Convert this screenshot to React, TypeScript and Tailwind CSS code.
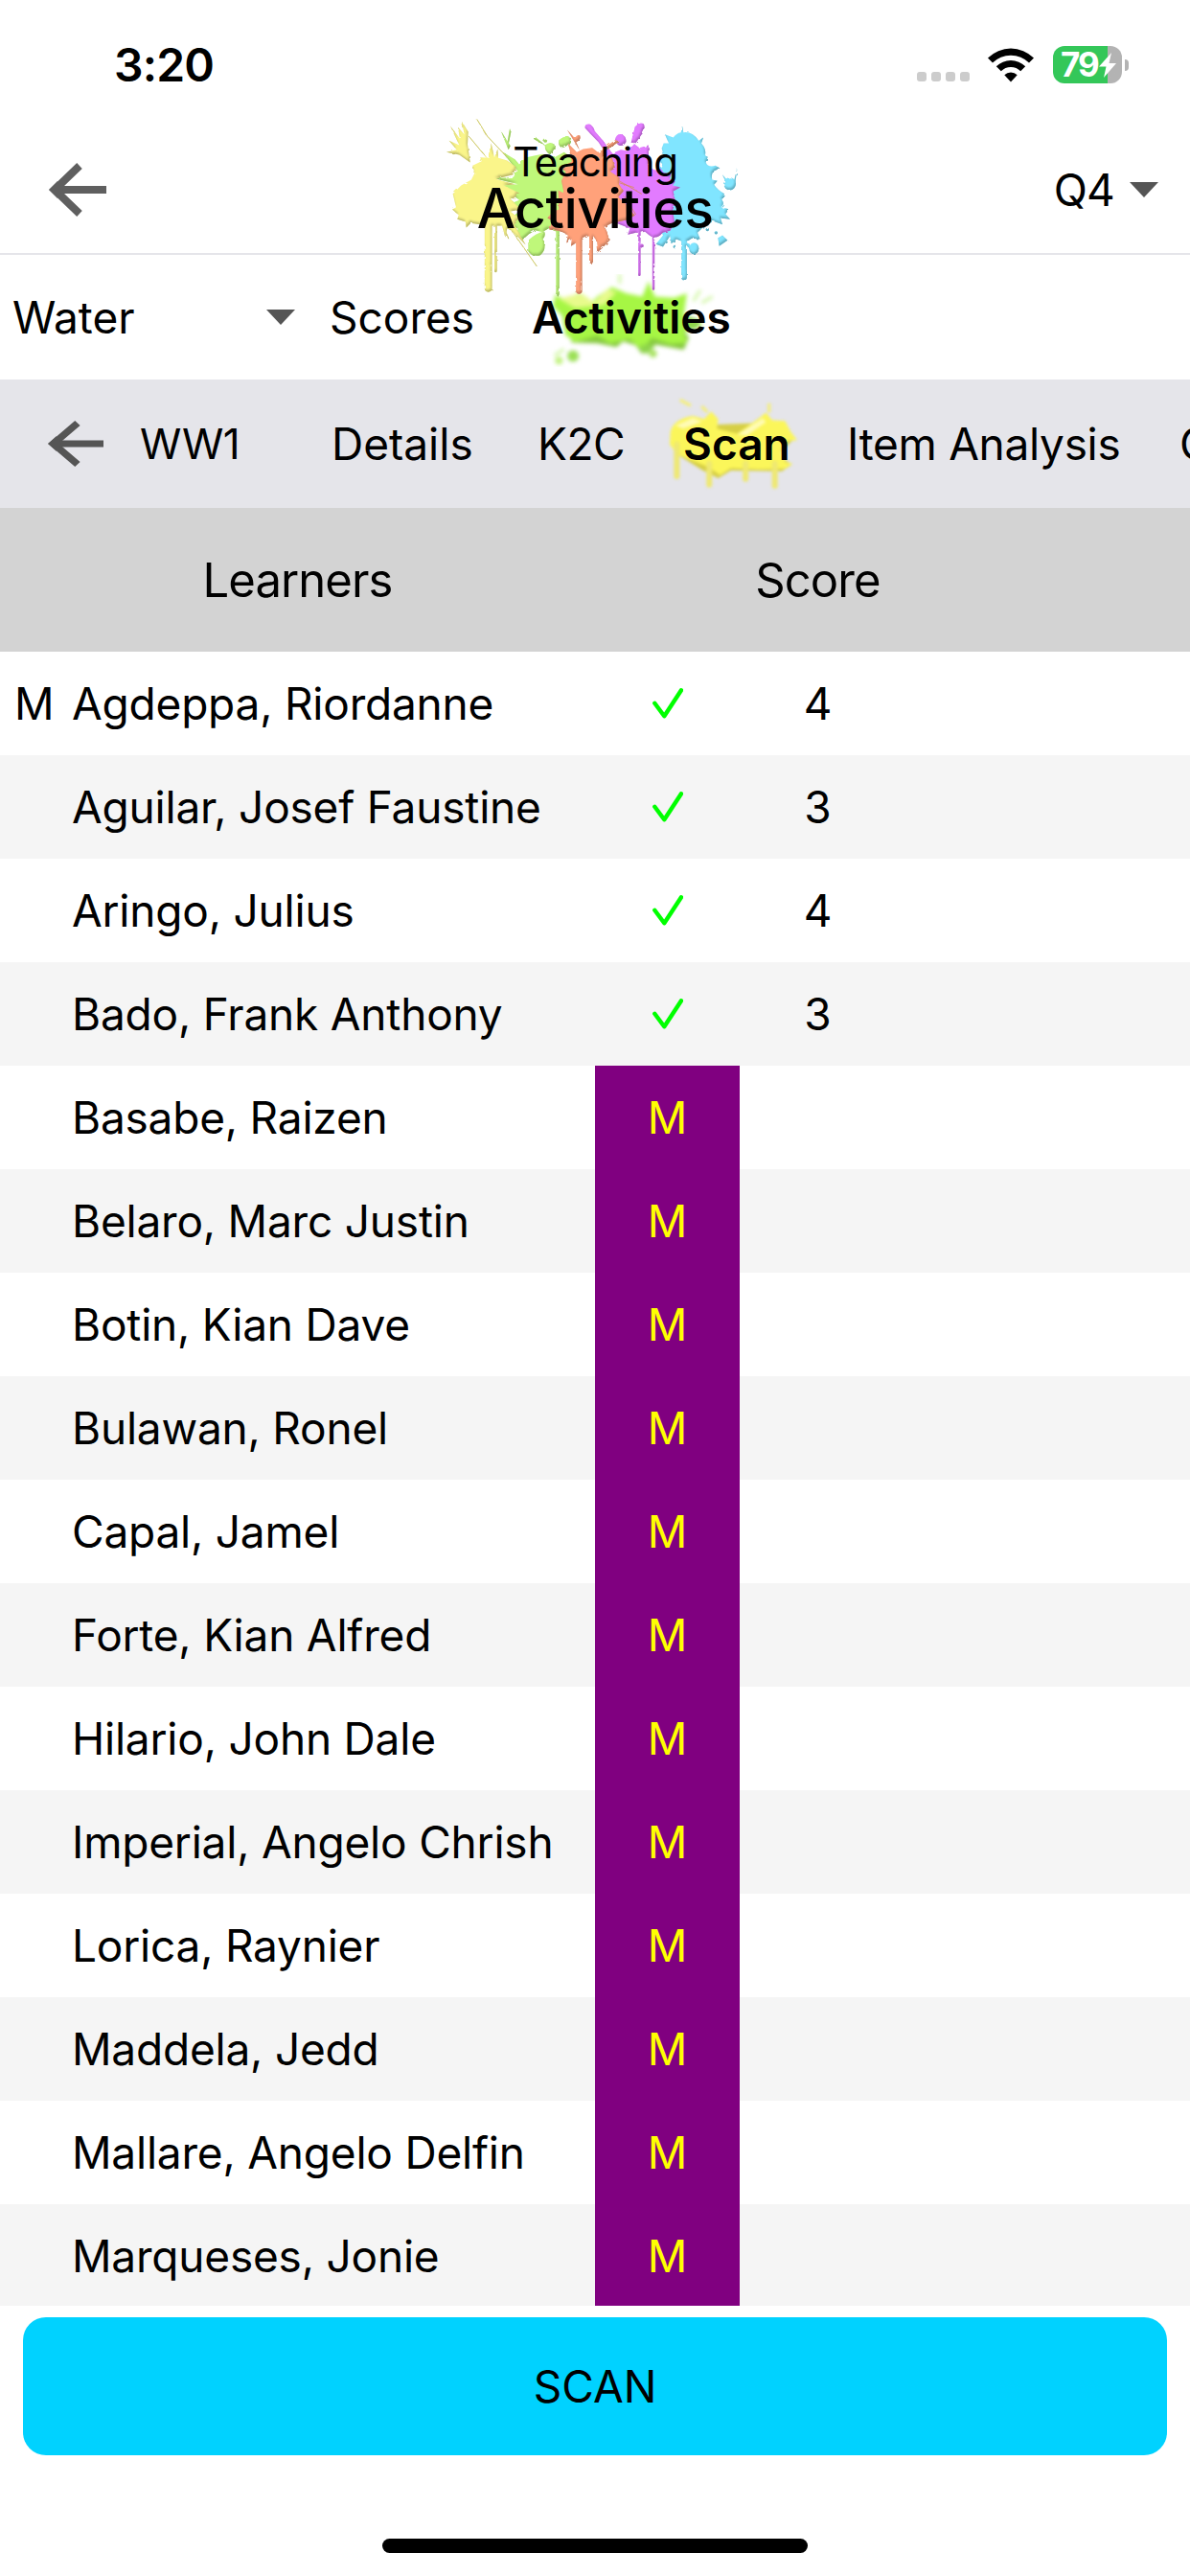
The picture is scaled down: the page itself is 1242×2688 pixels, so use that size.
import { ReactNode } from "react";

interface Learner {
  group?: string;
  name: string;
  score?: number;
}

const LEARNERS: Learner[] = [
  { group: "M", name: "Agdeppa, Riordanne", score: 4 },
  { name: "Aguilar, Josef Faustine", score: 3 },
  { name: "Aringo, Julius", score: 4 },
  { name: "Bado, Frank Anthony", score: 3 },
  { name: "Basabe, Raizen" },
  { name: "Belaro, Marc Justin" },
  { name: "Botin, Kian Dave" },
  { name: "Bulawan, Ronel" },
  { name: "Capal, Jamel" },
  { name: "Forte, Kian Alfred" },
  { name: "Hilario, John Dale" },
  { name: "Imperial, Angelo Chrish" },
  { name: "Lorica, Raynier" },
  { name: "Maddela, Jedd" },
  { name: "Mallare, Angelo Delfin" },
  { name: "Marqueses, Jonie" },
];

function BackArrow({ className }: { className: string }) {
  return (
    <svg viewBox="0 0 60 58" preserveAspectRatio="none" fill="none" stroke="currentColor" className={className}>
      <path d="M32 4 6 29l26 25" strokeWidth="8" />
      <path d="M6 29h54" strokeWidth="8" />
      <path d="M0 29 9 20l6 9-6 9z" fill="currentColor" stroke="none" />
    </svg>
  );
}

function Caret() {
  return (
    <svg viewBox="0 0 30 16" className="h-4 w-[30px] shrink-0 text-[#555]">
      <path d="M0 0h30L15 16z" fill="currentColor" />
    </svg>
  );
}

function Check() {
  return (
    <svg viewBox="0 0 32 32" fill="none" className="h-8 w-8">
      <path d="M2.3 15.8 12.3 29.2 30 2.3" stroke="#00ff00" strokeWidth="4.4" strokeLinecap="round" strokeLinejoin="round" />
    </svg>
  );
}

// Five paint blobs with drips behind the page title
function TitleSplash() {
  return (
    <svg viewBox="0 0 1080 620" className="absolute -top-5 left-[442px] h-[207px] w-[360px]">
      <defs>
        <filter id="bevel" x="-10%" y="-10%" width="120%" height="120%" colorInterpolationFilters="sRGB">
          <feTurbulence type="fractalNoise" baseFrequency="0.06" numOctaves="2" seed="4" result="noise" />
          <feDisplacementMap in="SourceGraphic" in2="noise" scale="8" result="paint" />
          <feOffset in="paint" dx="-4" dy="-5" result="shifted" />
          <feGaussianBlur in="shifted" stdDeviation="2.5" result="soft" />
          <feComposite in="paint" in2="soft" operator="out" result="edge" />
          <feColorMatrix in="edge" type="matrix" values=".72 0 0 0 0 0 .72 0 0 0 0 0 .72 0 0 0 0 0 .9 0" result="shade" />
          <feMerge>
            <feMergeNode in="paint" />
            <feMergeNode in="shade" />
          </feMerge>
        </filter>
      </defs>
      <g filter="url(#bevel)" fill="#80e5ff" stroke="#80e5ff" strokeLinecap="round">
        <path stroke="none" d="M752 112 768 112 756 84 782 94 Q792 80 806 78L810 58 814 78Q842 74 862 104L876 94 870 112Q886 130 882 150L890 155 884 172Q890 188 914 182L928 190 908 200Q900 210 904 226L920 230 910 242Q920 258 942 270L934 288Q944 302 932 312L956 318 946 334 960 350 930 346 936 366 908 356 878 372 858 392 866 412 840 410Q826 422 812 420L792 412 776 426 772 402 750 436 728 428 750 400 738 376 726 300 730 210 748 184 738 160 752 150 746 128z" />
        <path strokeWidth="17" d="M816 400V532" />
        <g stroke="none">
          <ellipse cx="959" cy="239" rx="19" ry="20" />
          <path d="M972 230 982 192 976 236zM944 228 936 210 952 228z" />
          <ellipse cx="847" cy="441" rx="15" ry="18" />
          <path d="M834 428 812 418 838 448zM922 408 936 400 952 416 926 434z" />
          <circle cx="889" cy="382" r="5" />
          <circle cx="916" cy="392" r="5" />
          <circle cx="787" cy="436" r="5" />
        </g>
      </g>
      <g filter="url(#bevel)" fill="#e27bff" stroke="#e27bff" strokeLinecap="round">
        <path stroke="none" d="M560 140 594 142 618 132 640 136 660 114 676 126 704 118 706 180Q720 204 744 192L752 204 776 208 770 224 788 232 780 244 804 250 782 262 790 300 780 320 786 360 772 386 748 392Q736 412 712 404L690 386 640 398 646 378 600 360 590 250z" />
        <path strokeWidth="7" d="M676 380V524M720 390V568" />
        <path stroke="none" d="M506 64Q504 50 520 52 534 60 536 74L562 104 596 150 580 158 548 108 526 86zM600 100Q604 80 622 84 636 92 634 108 622 126 608 116zM662 60Q676 44 690 52 696 72 682 86L664 112 650 110 656 84z" />
        <circle cx="683" cy="433" r="6" stroke="none" />
      </g>
      <g filter="url(#bevel)" fill="#bff77a" stroke="#bff77a" strokeLinecap="round">
        <path stroke="none" d="M224 222 282 218 292 196 246 138 286 162 300 178 322 156 350 150 372 146 410 156 440 140 470 160 480 320 420 390 392 378 372 390 350 384 330 396 310 414 290 402 296 380 256 360 300 326 260 306 300 290 240 244 296 240z" />
        <path strokeWidth="10" d="M420 380V584" />
        <g stroke="none">
          <path d="M424 102Q442 84 462 96 456 122 434 126 420 120 424 102zM380 118Q396 104 410 116 412 134 396 146 380 140 380 118zM350 92 388 124 344 98zM242 72 272 120 266 132zM328 416Q350 394 378 388 384 400 374 412 388 444 366 462 342 468 328 450z" />
          <circle cx="382" cy="105" r="5" />
          <path d="m270 66 4 10-8 40-4-4z" />
        </g>
      </g>
      <g filter="url(#bevel)" fill="#ffa17a" stroke="#ffa17a" strokeLinecap="round">
        <path stroke="none" d="M462 148 452 112 480 140 500 130 528 126 546 140 566 130 560 160 590 156 600 190 584 200 614 220 612 240 626 262 610 280 632 300 662 338 636 352 590 362 566 374 584 414 560 440 544 454 540 414 528 398 494 414 462 434 464 412 448 424 452 400 424 386 394 382 404 354 388 346 406 324 424 320 422 260 440 268 432 230 446 200 426 190 464 170z" />
        <path strokeWidth="19" d="M487 400V574" />
        <path strokeWidth="12" d="M525 390V482" />
        <path stroke="none" d="m450 70 24 26q8-14 16-8 4 14-12 20l12 28zM560 130l40-28 14 4-46 30z" />
        <path strokeWidth="2" fill="none" d="m610 228 72 42M614 236l44 14M630 280l34 54" />
      </g>
      <g filter="url(#bevel)" fill="#faf58a" stroke="#faf58a" strokeLinecap="round">
        <path stroke="none" d="M154 182 182 168 178 156 206 158 212 112 222 156 232 130 234 158 262 166 290 186 280 210 226 224 286 240 252 244 300 268 276 290 304 318 272 326 304 350 284 366 320 430 276 386 262 378 256 406 246 370 204 370 178 366 148 362 134 376 132 358 106 350 110 336 90 320 102 312 92 270 118 244 150 226 160 206z" />
        <path stroke="none" d="M84 58 114 98 108 62 128 84 120 44 140 76 138 116 146 172 112 148 72 140 104 132 80 104 112 118z" />
        <path strokeWidth="23" d="M203 366V566" />
        <path strokeWidth="8" d="M226 370V512" />
        <path strokeWidth="3" fill="none" d="m168 38 32 52 62 66M142 90l58 70M280 390l74 106M250 370l16 40" />
      </g>
    </svg>
  );
}

function GreenSplash() {
  return (
    <svg viewBox="0 0 560 290" className="absolute -top-[22px] left-[5px] h-[97px] w-[187px]">
      <filter id="softGreen" x="-10%" y="-10%" width="120%" height="120%" colorInterpolationFilters="sRGB">
        <feGaussianBlur stdDeviation="6" />
      </filter>
      <g filter="url(#softGreen)">
        <path fill="#86c93e" d="M96 130 110 214 190 216 250 228 270 210 310 222 330 250 370 220 460 236 476 200 430 120z" />
        <path fill="#a6f644" d="M60 62 100 92 130 56 170 90 190 70 236 40 280 60 330 70 350 22 370 70 430 74 470 60 460 130 520 160 460 180 470 214 420 218 360 200 330 236 290 202 230 216 190 192 120 212 90 190 80 130 50 100z" />
        <path fill="#e8fb8c" d="M70 76 140 60 180 88 220 48 250 56 210 96 120 106z" />
        <path fill="#8ed44b" d="M470 130 516 146 500 172 462 174zM328 220l44 2-26 28-22-10z" />
        <circle cx="114" cy="256" r="18" fill="#9be056" />
        <circle cx="70" cy="270" r="12" fill="#c0f27c" />
        <circle cx="364" cy="248" r="12" fill="#a7e260" />
        <path stroke="#d3f7a8" strokeWidth="9" d="m490 84 22-34M516 90l34-20M86 234l-30 20M260 30V0" />
      </g>
    </svg>
  );
}

function YellowSplash() {
  return (
    <svg viewBox="0 0 430 310" className="absolute -top-[26px] -left-5 h-[103px] w-[143px]">
      <filter id="softYellow" x="-10%" y="-10%" width="120%" height="120%" colorInterpolationFilters="sRGB">
        <feGaussianBlur stdDeviation="5" />
      </filter>
      <g filter="url(#softYellow)">
        <path fill="#d6cf45" d="M30 150 40 180 120 230 170 256 210 232 370 234 400 214 360 180 410 130 370 80 100 90z" />
        <path fill="#fbf65a" d="M20 110Q30 70 90 60L126 70 148 46 170 70 166 100 230 116 300 66 320 50 340 74 380 76 398 110 418 136 380 140 366 170 382 206 404 210 380 226 300 228 210 224 176 246 142 222 40 180 18 150z" />
        <path fill="#fffbb5" d="M36 90 90 66 120 78 60 100zM230 118 310 68 320 80 260 122z" />
        <path stroke="#eee872" strokeWidth="18" strokeLinecap="round" d="M40 150V250M142 210V276M256 210V258M348 210V280" />
        <path stroke="#f3ee80" strokeWidth="10" d="m50 10 34 18M118 30l18 18M330 20v30" />
      </g>
    </svg>
  );
}

function StatusBar() {
  return (
    <div className="flex h-[132px] items-center justify-between pt-[3px] pr-16 pl-[119px]">
      <span className="text-[48px] leading-none font-semibold tracking-[-0.8px]">3:20</span>
      <div className="flex items-center">
        <div className="mt-[25px] flex gap-[5px]">
          {[0, 1, 2, 3].map(i => (
            <div key={i} className="h-2.5 w-2.5 rounded-[3px] bg-[#ccc]" />
          ))}
        </div>
        <svg viewBox="0 0 48 36" className="ml-[19px] h-9 w-12">
          <path d="M0 10.5a34 34 0 0 1 48 0l-5 5a27 27 0 0 0-38 0z" />
          <path d="M8.800 19.300a21.500 21.500 0 0 1 30.400 0l-5 5a14.400 14.400 0 0 0-20.400 0z" />
          <path d="M17.300 28.300a9.500 9.500 0 0 1 13.400 0L24 35.500z" />
        </svg>
        <div className="ml-5 flex h-[39px] w-[72px] items-center rounded-xl bg-linear-to-r from-[#34c759] from-79% to-[#b3b3b3] to-79% pl-2">
          <span className="text-[35px] leading-none font-bold tracking-[-2px] text-white">79</span>
          <svg viewBox="0 0 18 26" className="ml-px h-[26px] w-[18px] shrink-0">
            <path d="M13 0 0 14.500h7.500L5 26 18 11h-7.500z" fill="#fff" />
          </svg>
        </div>
        <div className="ml-[3px] h-3 w-1 rounded-r-full bg-[#b3b3b3]" />
      </div>
    </div>
  );
}

function Tab({ className, children }: { className: string; children: ReactNode }) {
  return <span className={`relative shrink-0 whitespace-nowrap ${className}`}>{children}</span>;
}

export default function App() {
  return (
    <div className="flex h-[2688px] w-[1242px] flex-col overflow-hidden bg-white font-['Inter',sans-serif] text-[46px] leading-none text-black">
      <StatusBar />

      {/* Title bar */}
      <header className="relative z-10 grid h-[134px] grid-cols-[1fr_auto_1fr] items-center border-b-2 border-[#e5e5ea] pr-[33px] pl-[51px]">
        <TitleSplash />
        <BackArrow className="h-[58px] w-[60px] text-[#5f5f5f]" />
        <h1 className="relative -left-[9px] flex flex-col items-center pb-[3px]">
          <span className="text-[42px] leading-[42px] tracking-[-1.3px]">Teaching</span>
          <span className="text-[57px] leading-[56px] font-medium tracking-[-0.5px]">Activities</span>
        </h1>
        <div className="flex items-center gap-4 justify-self-end">
          <span className="tracking-[-0.8px]">Q4</span>
          <Caret />
        </div>
      </header>

      {/* Section tabs */}
      <nav className="flex h-[130px] items-center">
        <div className="flex w-[308px] items-center justify-between pl-[13px]">
          <span>Water</span>
          <Caret />
        </div>
        <Tab className="ml-9">Scores</Tab>
        <Tab className="ml-[60px] font-semibold">
          <GreenSplash />
          <span className="relative">Activities</span>
        </Tab>
      </nav>

      {/* Activity tabs, scrolls off to the right */}
      <nav className="flex h-[134px] items-center overflow-hidden bg-[#e5e5ea]">
        <BackArrow className="ml-[50px] h-[50px] w-[58px] shrink-0 text-[#555]" />
        <Tab className="ml-[38px] w-[200px] text-[44px] tracking-[-0.5px]">WW1</Tab>
        <Tab className="w-[215px]">Details</Tab>
        <Tab className="w-[152px] tracking-[-0.5px]">K2C</Tab>
        <Tab className="w-[171px] font-semibold">
          <YellowSplash />
          <span className="relative">Scan</span>
        </Tab>
        <Tab className="w-[347px] tracking-[-0.3px]">Item Analysis</Tab>
        <Tab className="">O</Tab>
      </nav>

      <div className="flex h-[150px] shrink-0 items-center bg-[#d3d3d3] pt-px text-center text-[49px] tracking-[-0.9px]">
        <span className="w-[621px]">Learners</span>
        <span className="ml-[151px] w-[163px]">Score</span>
      </div>

      {/* Learner rows */}
      <div className="h-[1726px] shrink-0 overflow-hidden">
        {LEARNERS.map(learner => (
          <div key={learner.name} className="flex h-[108px] items-center odd:bg-white even:bg-[#f5f5f5]">
            <span className="w-[75px] pl-[15px]">{learner.group}</span>
            <span className="w-[546px] tracking-[-0.2px] whitespace-nowrap">{learner.name}</span>
            {learner.score ? (
              <div className="flex h-full w-[151px] items-center justify-center">
                <Check />
              </div>
            ) : (
              <div className="flex h-full w-[151px] items-center justify-center bg-[#800080] text-[#ffff00]">M</div>
            )}
            <span className="w-[163px] text-center">{learner.score}</span>
          </div>
        ))}
      </div>

      <button className="mx-6 mt-3 h-36 shrink-0 rounded-3xl bg-[#00d2ff]">SCAN</button>
      <div className="mx-auto mt-[87px] h-[15px] w-[444px] shrink-0 rounded-full bg-black" />
    </div>
  );
}
